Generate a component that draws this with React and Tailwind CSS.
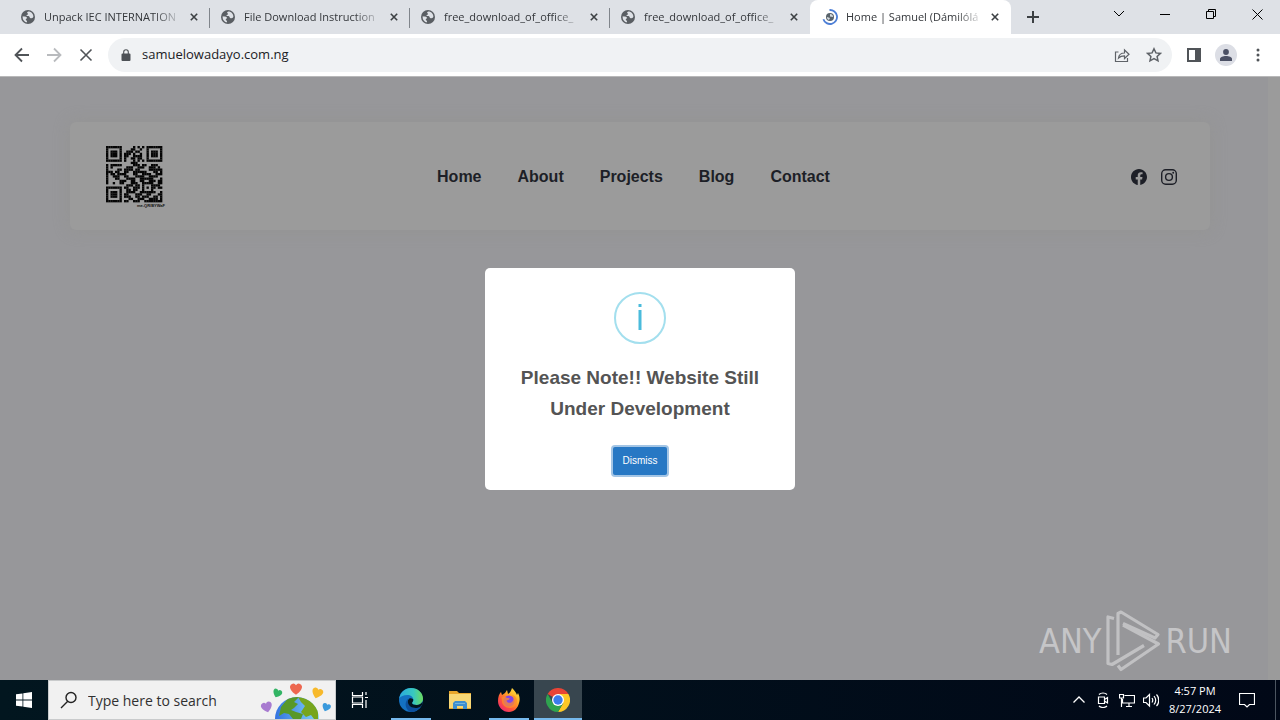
import React from "react";

const QR_ROWS = [
  "1111111000001010101111111",
  "1000001000011001001000001",
  "1011101001110110001011101",
  "1011101011101001001011101",
  "1011101011001111001011101",
  "1000001010011011001000001",
  "1111111010001010101111111",
  "0000000000011100000000000",
  "1011111000001110110011100",
  "1010000001110011100111010",
  "1000011011110110000111111",
  "1110110011001111110001101",
  "1011011110001100111100111",
  "1001110011000111100111100",
  "1000110001111001111110001",
  "1000001110011001100111011",
  "1001001100011100111110011",
  "0000000001110110100011110",
  "1111111011001110101011011",
  "1000001001101100100010000",
  "1011101001111001111111001",
  "1011101011000111001100011",
  "1011101011100110111001101",
  "1000001000110011100111101",
  "1111111011001110011111111",
];

function QrCode() {
  return (
    <svg viewBox="0 0 60 62" className="h-[62px] w-[60px]" role="img" aria-label="QR code">
      <g transform="scale(2.25)" fill="#050505" shapeRendering="geometricPrecision">
        {QR_ROWS.map((row, y) =>
          [...row].map((cell, x) =>
            cell === "1" ? <rect key={`${x}-${y}`} x={x} y={y} width="1.04" height="1.04" /> : null
          )
        )}
      </g>
      <text x="59" y="61" textAnchor="end" fontSize="4" fontWeight="700" fontFamily="Liberation Sans, sans-serif" fill="#111">
        me-QR/BYWaF
      </text>
    </svg>
  );
}

function GlobeIcon({ className }) {
  return (
    <svg viewBox="0 0 16 16" className={className} aria-hidden="true">
      <circle cx="8" cy="8" r="7" fill="#5a5e63" />
      <path d="M8.3 2.6c-1.5.3-1.6 1.6-.5 1.9 1 .4-.2 1.3-1 1.6-.7.5-.2 1 .7 1 1.700 0 2.200.7 2.300 1.600.4.8 1.500.3 2.400.2.700 0 .9-.6 1.200-1.300C13.200 4.700 11 2.500 8.300 2.600z" fill="#dee1e6" />
      <path d="M2.700 7.200c1.400.2 3.300.3 4 1.100.6.7.2 1.300-.6 1.600-.700.4-.2 1.300.400 1.500.500.300.600 1.100.5 1.900C4.100 13 2.300 10.300 2.700 7.200z" fill="#dee1e6" />
    </svg>
  );
}

function SpinnerIcon() {
  return (
    <svg viewBox="0 0 16 16" className="size-4 shrink-0" aria-hidden="true">
      <circle cx="8" cy="8" r="4" fill="#59636b" />
      <path d="M8 5c2 0 3 1 3 3L8 7.500zM5 8l3 1-1 2C5.500 10.500 5 9.500 5 8z" fill="#d5dbe0" />
      <path d="M7.500 1A7 7 0 1 1 1.400 10.200" fill="none" stroke="#4d7fd6" strokeWidth="1.800" />
    </svg>
  );
}

function Stroke({ d, className = "size-4", width = 2, box = "0 0 16 16" }) {
  return (
    <svg viewBox={box} className={className} fill="none" stroke="currentColor" strokeWidth={width} aria-hidden="true">
      <path d={d} />
    </svg>
  );
}

function Tab({ title, active, divider }) {
  return (
    <div
      className={
        active
          ? "relative flex w-[201px] items-center rounded-t-lg bg-white pr-2 pl-3"
          : "relative flex w-[200px] items-center pr-2 pl-[10px]"
      }
    >
      {active ? <SpinnerIcon /> : <GlobeIcon className="size-4 shrink-0" />}
      <span className="ml-2 w-[138px] text-[11px] whitespace-nowrap text-[#34373b] [mask-image:linear-gradient(to_right,black_80%,transparent)]">
        {title}
      </span>
      <button aria-label={`Close ${title}`} className="ml-auto flex size-4 shrink-0 items-center justify-center text-[#3c4043]">
        <Stroke d="M1 1l8 8M9 1l-8 8" box="0 0 10 10" className="size-2" />
      </button>
      {divider && <span className="absolute top-2 right-0 h-5 w-px bg-[#80858b]" />}
    </div>
  );
}

function TabStrip() {
  return (
    <div className="flex h-[34px] shrink-0 bg-[#dee1e6] pl-[10px]">
      <Tab title="Unpack IEC INTERNATION" divider />
      <Tab title="File Download Instruction" divider />
      <Tab title="free_download_of_office_" divider />
      <Tab title="free_download_of_office_" />
      <Tab title="Home | Samuel (Dámilólá" active />
      <button aria-label="New tab" className="ml-[14px] flex w-4 items-center justify-center text-[#3c4043]">
        <Stroke d="M6 0v12M0 6h12" box="0 0 12 12" className="size-3" />
      </button>
      <div className="ml-auto flex h-7 text-black">
        <button aria-label="Search tabs" className="flex w-[46px] items-center justify-center">
          <Stroke d="M1 1l5 5 5-5" box="0 0 12 8" width={1} className="h-2 w-3" />
        </button>
        <button aria-label="Minimize" className="flex w-[46px] items-center justify-center">
          <Stroke d="M0 5.500h10" box="0 0 10 10" width={1} className="size-[10px]" />
        </button>
        <button aria-label="Restore" className="flex w-[46px] items-center justify-center">
          <Stroke d="M.5 2.500h7v7h-7zM2.500 2.500v-2h7v7h-2" box="0 0 10 10" width={1} className="size-[10px]" />
        </button>
        <button aria-label="Close window" className="flex w-[46px] items-center justify-center">
          <Stroke d="M.5.500l10 10M10.500.500l-10 10" box="0 0 11 11" width={1} className="size-[11px]" />
        </button>
      </div>
    </div>
  );
}

function Toolbar() {
  return (
    <div className="flex h-[43px] shrink-0 items-center border-b border-[#b8b8b9] bg-white pr-[14px] pl-[14px]">
      <div className="flex gap-4 text-[#505458]">
        <button aria-label="Back">
          <Stroke d="M15 8H2M8 1.500L1.500 8 8 14.500" width={1.800} />
        </button>
        <button aria-label="Forward" className="text-[#b9bbbe]">
          <Stroke d="M1 8h13M8 1.500L14.500 8 8 14.500" width={1.800} />
        </button>
        <button aria-label="Stop loading">
          <Stroke d="M2.500 2.500l11 11M13.500 2.500l-11 11" width={1.600} />
        </button>
      </div>
      <div className="ml-[14px] flex h-[34px] flex-1 items-center rounded-full bg-[#f0f2f4] pr-[10px] pl-[13px] text-[#5f6368]">
        <svg viewBox="0 0 10 12" className="h-3 w-[10px]" aria-hidden="true">
          <path d="M1.500 4.500h7a1 1 0 0 1 1 1V11a1 1 0 0 1-1 1h-7a1 1 0 0 1-1-1V5.500a1 1 0 0 1 1-1z" fill="#4d5156" />
          <path d="M2.700 5V3a2.300 2.300 0 0 1 4.600 0v2" fill="none" stroke="#4d5156" strokeWidth="1.100" />
        </svg>
        <input
          aria-label="Address"
          defaultValue="samuelowadayo.com.ng"
          className="ml-[11px] min-w-0 flex-1 bg-transparent text-[13px] text-[#202124] outline-none"
        />
        <div className="flex gap-4">
          <button aria-label="Share">
            <Stroke
              d="M4.500 5H1.500v9.500h12V11M4.500 11c.5-3.500 2.500-5 6-5V3l4.500 4.300-4.500 4.200V8.800c-2.600 0-4.500.7-6 2.200z"
              width={1.200}
            />
          </button>
          <button aria-label="Bookmark this page">
            <Stroke
              d="M8 1.800l1.900 4.100 4.500.5-3.300 3 .9 4.400L8 11.600l-4 2.200.9-4.400-3.300-3 4.500-.5z"
              width={1.500}
            />
          </button>
        </div>
      </div>
      <div className="ml-[14px] flex items-center gap-[13px] text-[#505458]">
        <button aria-label="Side panel">
          <svg viewBox="0 0 16 16" className="size-4" aria-hidden="true">
            <path d="M1 1h14v14H1zM3 3v10h6V3z" fill="currentColor" fillRule="evenodd" />
          </svg>
        </button>
        <button aria-label="Profile" className="flex size-[22px] items-center justify-center rounded-full bg-[#dcdee5] text-[#4b5064]">
          <svg viewBox="0 0 14 14" className="size-[14px]" fill="currentColor" aria-hidden="true">
            <circle cx="7" cy="4" r="2.900" />
            <path d="M1 13v-2c0-2 3-3 6-3s6 1 6 3v2z" />
          </svg>
        </button>
        <button aria-label="Menu">
          <svg viewBox="0 0 16 16" className="size-4" fill="currentColor" aria-hidden="true">
            <circle cx="8" cy="3" r="1.500" />
            <circle cx="8" cy="8" r="1.500" />
            <circle cx="8" cy="13" r="1.500" />
          </svg>
        </button>
      </div>
    </div>
  );
}

function SiteHeader() {
  return (
    <header className="grid h-[108px] grid-cols-[1fr_auto_1fr] items-center rounded-md bg-[#9b9b9b] pt-px pr-[33px] pl-9 shadow-[0_0_16px_rgba(148,148,145,0.9)]">
      <a href="#home" aria-label="Samuel home" className="w-[60px]">
        <QrCode />
      </a>
      <nav className="flex gap-9 pr-4 font-['Liberation_Sans',Arial,sans-serif] text-[16px] font-bold text-[#1d1f27]">
        <a href="#home">Home</a>
        <a href="#about">About</a>
        <a href="#projects">Projects</a>
        <a href="#blog">Blog</a>
        <a href="#contact">Contact</a>
      </nav>
      <div className="flex justify-end gap-[14px] text-[#1d1f27]">
        <a href="#facebook" aria-label="Facebook">
          <svg viewBox="0 0 16 16" className="size-4" fill="currentColor" aria-hidden="true">
            <path d="M16 8.049c0-4.446-3.582-8.050-8-8.050C3.580 0-.002 3.603-.002 8.050c0 4.017 2.926 7.347 6.750 7.951v-5.625h-2.030V8.050H6.750V6.275c0-2.017 1.195-3.131 3.022-3.131.876 0 1.791.157 1.791.157v1.980h-1.009c-.993 0-1.303.621-1.303 1.258v1.510h2.218l-.354 2.326H9.250V16c3.824-.604 6.750-3.934 6.750-7.951z" />
          </svg>
        </a>
        <a href="#instagram" aria-label="Instagram">
          <svg viewBox="0 0 16 16" className="size-4" fill="none" stroke="currentColor" strokeWidth="1.400" aria-hidden="true">
            <rect x=".7" y=".7" width="14.600" height="14.600" rx="4" />
            <circle cx="8" cy="8" r="3.400" />
            <circle cx="12.200" cy="3.800" r=".95" fill="currentColor" stroke="none" />
          </svg>
        </a>
      </div>
    </header>
  );
}

function NoticeDialog() {
  return (
    <div
      role="dialog"
      aria-labelledby="notice-title"
      className="flex w-[310px] flex-col items-center rounded-[5px] bg-white px-5 pt-6 pb-[15px] font-['Liberation_Sans',Arial,sans-serif]"
    >
      <div className="flex size-[52px] items-center justify-center rounded-full border-2 border-[#a3dfee]">
        <svg viewBox="0 0 6 28" className="h-7 w-[6px]" fill="#4abbdc" aria-hidden="true">
          <rect x="1.500" y="0" width="3" height="3" />
          <rect x="1.500" y="6" width="3" height="20" />
        </svg>
      </div>
      <h2 id="notice-title" className="mt-[18px] text-center text-[19px] leading-[31px] font-bold text-[#545454]">
        Please Note!! Website Still
        <br />
        Under Development
      </h2>
      <button className="mt-[23px] h-7 w-[54px] rounded-[2px] bg-[#2778c4] text-[10px] text-white ring-2 ring-[#a3c5e5]">
        Dismiss
      </button>
    </div>
  );
}

function Watermark() {
  return (
    <div className="absolute right-12 bottom-2 flex items-center font-['Liberation_Sans_Narrow','DejaVu_Sans_Condensed',sans-serif] text-[34px] leading-none text-[#c5c5c7]">
      <span>ANY</span>
      <svg viewBox="0 0 56 62" className="mx-1 h-[62px] w-14" fill="none" stroke="#c1c1c3" strokeWidth="3.200" strokeLinejoin="round" aria-hidden="true">
        <path d="M9 8.500L3 7v46.500l4 1L39 35.500" />
        <path d="M13 45V3.500L16 2l37 22.500-3 3.500L18 13.500" />
        <path d="M18 15l35.500 19L16 59.500l-3-4" />
      </svg>
      <span>RUN</span>
    </div>
  );
}

const HEART = "M0 4C-4 1-5-1-5-3a2.700 2.700 0 0 1 5-1 2.700 2.700 0 0 1 5 1c0 2-1 4-5 7z";

function SearchArt() {
  return (
    <svg viewBox="0 0 76 38" className="h-[38px] w-[76px] self-end" aria-hidden="true">
      <defs>
        <clipPath id="earth">
          <circle cx="39" cy="38" r="22" />
        </clipPath>
        <linearGradient id="sea">
          <stop offset="0" stopColor="#3373e0" />
          <stop offset="1" stopColor="#82d3fa" />
        </linearGradient>
      </defs>
      <circle cx="39" cy="38" r="22" fill="url(#sea)" />
      <g clipPath="url(#earth)" fill="#589829">
        <path d="M23 26l8-10h10l-5 5 4 2-4 4-3 2 5 2 7 2-2 5h-8l-4-5-5-1-5 3z" />
        <path d="M40 16c7 0 16 5 20 13v9h-4l-3-4-5 2-5-5 4-6-4-4z" fill="#77a51d" />
      </g>
      <path d={HEART} transform="translate(38 9) scale(1.200)" fill="#ed6750" />
      <path d={HEART} transform="translate(19 13) rotate(22) scale(.9)" fill="#32b464" />
      <path d={HEART} transform="translate(59 13) rotate(18) scale(1.100)" fill="#f7b92b" />
      <path d={HEART} transform="translate(9 27) rotate(-14) scale(1.100)" fill="#a87bd0" />
      <path d={HEART} transform="translate(68 27) rotate(20) scale(.85)" fill="#3999dc" />
    </svg>
  );
}

function EdgeIcon() {
  return (
    <svg viewBox="0 0 24 24" className="size-6" aria-hidden="true">
      <defs>
        <linearGradient id="edge-top" x1="0" y1=".5" x2="1" y2=".5">
          <stop offset="0" stopColor="#2aa9de" />
          <stop offset=".6" stopColor="#38c8c0" />
          <stop offset="1" stopColor="#6ddc5d" />
        </linearGradient>
      </defs>
      <circle cx="12" cy="12" r="12" fill="#1471c2" />
      <path d="M.2 10.500C1.200 4.300 6 0 12 0c7 0 12 5 12 10.500 0 4-3 6.500-6.500 6.500-2.500 0-4.500-1-4.500-2 0-.8 1.300-1.200 1.300-3.200C14.300 9 11.500 7 8.500 7 4.500 7 1.500 8.500.2 10.500z" fill="url(#edge-top)" />
      <path d="M9.500 10.500C7 14 10 20 16.500 20c2 0 3.600-.6 5.200-1.500C19 22.500 16 24 12 24 6.500 22.500 4.500 14 9.500 10.500z" fill="#0c4f9d" />
      <path d="M13 15c0 1 2 2 4.500 2 3 0 5-1.500 6-3.500.4 2-.4 3.700-1.800 5C20 19.600 18 20 16.500 20c-4.500 0-7.500-3-7.700-6 0-1.500.7-3 1.900-3.700 1.800 0 3.600.5 3.600 1.500 0 2-1.300 2.400-1.300 3.200z" fill="#03141f" />
    </svg>
  );
}

function FolderIcon() {
  return (
    <svg viewBox="0 0 22 18" className="h-[18px] w-[22px]" aria-hidden="true">
      <path d="M0 0h8l2 2h12v16H0z" fill="#e8a62b" />
      <path d="M0 3h22v14H0z" fill="#f8d775" />
      <path d="M4 18v-6l2-2h10l2 2v6h-4v-3H8v3z" fill="#3e8fd0" />
      <path d="M6 12h10v1H6z" fill="#72b4df" />
    </svg>
  );
}

function FirefoxIcon() {
  return (
    <svg viewBox="0 0 24 24" className="size-6" aria-hidden="true">
      <defs>
        <linearGradient id="fox" x1="1" y1="0" x2=".2" y2="1">
          <stop offset="0" stopColor="#fff04c" />
          <stop offset=".4" stopColor="#ffac26" />
          <stop offset=".7" stopColor="#ff5738" />
          <stop offset="1" stopColor="#ed2773" />
        </linearGradient>
      </defs>
      <path d="M1 13C1 9 2 6 4 4l1 3 3-2 2-3 1 4c2-1 3-3 4-6 2 2 4 4 5 7l1-2c2 4 2 7 1 10-1 5-5 9-10 9C5.500 24 1 19 1 13z" fill="url(#fox)" />
      <circle cx="12" cy="13" r="5.500" fill="#8345e6" />
      <path d="M4.500 9.500c2-1 4-1 5.500.5 1 0 2 0 3 .5-1 1.500-2.500 1.500-3.500 2 .5 2.500 3.500 3 5.500 1.500 2-1.500 2-5-1-7 4 0 6 3 6 6.500 0 4-3.500 6.500-7.500 6.500S5 17 5 13.500z" fill="#ff8c2c" opacity=".75" />
    </svg>
  );
}

function ChromeIcon() {
  return (
    <svg viewBox="0 0 24 24" className="size-6" aria-hidden="true">
      <path d="M12 12L1.600 6A12 12 0 0 1 22.400 6z" fill="#e84436" />
      <path d="M12 12V6h10.400A12 12 0 0 1 12 24l5.200-9z" fill="#fdc827" />
      <path d="M12 12l5.200 3L12 24A12 12 0 0 1 1.600 6l5.200 9z" fill="#2fa34f" />
      <circle cx="12" cy="12" r="6" fill="#fff" />
      <circle cx="12" cy="12" r="4.700" fill="#3a7cec" />
    </svg>
  );
}

function TaskButton({ label, running, active, children }) {
  return (
    <button
      aria-label={label}
      className={
        active
          ? "relative flex w-12 items-center justify-center bg-[#38464f]"
          : "relative flex w-12 items-center justify-center"
      }
    >
      {children}
      {running && (
        <span className={active ? "absolute inset-x-0 bottom-0 h-0.5 bg-[#76b9ed]" : "absolute inset-x-1 bottom-0 h-0.5 bg-[#76b9ed]"} />
      )}
    </button>
  );
}

function Taskbar() {
  return (
    <footer className="flex h-10 shrink-0 bg-linear-to-r from-[#02161f] to-[#010817] text-white">
      <button aria-label="Start" className="flex w-12 items-center justify-center">
        <svg viewBox="0 0 16 16" className="size-4" fill="#fff" aria-hidden="true">
          <path d="M0 2.300l6.500-.9v6.200H0zM7.300 1.300L16 0v7.600H7.300zM0 8.400h6.500v6.200L0 13.700zM7.300 8.400H16V16l-8.700-1.300z" />
        </svg>
      </button>
      <label className="flex w-72 items-center border border-[#c9cbcc] bg-[#f1f1f1] pr-px pl-[11px] text-[#222]">
        <Stroke d="M11 1.500a5 5 0 1 1 0 10 5 5 0 0 1 0-10zM7.500 10.500L1 17" box="0 0 18 18" width={1.400} className="size-[18px] shrink-0" />
        <input
          type="search"
          aria-label="Search"
          placeholder="Type here to search"
          className="ml-[10px] min-w-0 flex-1 bg-transparent text-[14px] outline-none placeholder:text-[#303030]"
        />
        <SearchArt />
      </label>
      <TaskButton label="Task view">
        <Stroke d="M1.500 0v3.500h10V0M1.500 16v-3.500h10V16M1.500 5h10v6h-10zM15 0v3M15 8v8M14 5.500h3" box="0 0 18 16" width={1.200} className="h-4 w-[18px]" />
      </TaskButton>
      <div className="ml-[3px] flex gap-px">
        <TaskButton label="Microsoft Edge" running>
          <EdgeIcon />
        </TaskButton>
        <TaskButton label="File Explorer">
          <FolderIcon />
        </TaskButton>
        <TaskButton label="Firefox" running>
          <FirefoxIcon />
        </TaskButton>
        <TaskButton label="Google Chrome" running active>
          <ChromeIcon />
        </TaskButton>
      </div>
      <div className="ml-auto flex items-center">
        <div className="flex gap-2">
          <button aria-label="Show hidden icons">
            <Stroke d="M2.500 10.500L8 5l5.500 5.500" width={1.300} />
          </button>
          <button aria-label="Meet now">
            <Stroke d="M3.500 5h6v6.500h-6zM9.500 7.500l3-2v5.500l-3-2M4 2.500c2-2 6-2 8 0M4 14c2 2 6 2 8 0" width={1.200} />
          </button>
          <button aria-label="Network">
            <Stroke d="M5.500 3.500h10v7.500H3.500V7M7 14.500h6M10 11v3.500M.5 2.500h4V6h-4zM2.500 6v9" width={1.200} />
          </button>
          <button aria-label="Volume">
            <Stroke d="M.5 6v4.500h2.500L6.500 14V2.500L3 6zM9 6c1 1.500 1 3 0 4.500M11 4c2 2.500 2 6 0 8.500M13.500 2.500c3 3 3 8.500 0 11.500" width={1.200} />
          </button>
        </div>
        <time className="ml-2 w-14 text-center text-[11px] leading-[18px]">
          4:57 PM
          <br />
          8/27/2024
        </time>
        <button aria-label="Notifications" className="ml-4">
          <Stroke d="M.5 1.500h15v11h-5L8 15l-2.500-2.500h-5z" width={1.200} />
        </button>
        <span className="mr-1 ml-5 h-10 w-px bg-[#4c5560]" />
      </div>
    </footer>
  );
}

export default function App() {
  return (
    <div className="flex min-h-screen flex-col overflow-hidden font-['Open_Sans','Noto_Sans',sans-serif]">
      <TabStrip />
      <Toolbar />
      <main className="relative flex flex-1 bg-[#97979a]">
        <div className="flex-1 pt-[45px] pr-[58px] pl-[70px]">
          <SiteHeader />
        </div>
        <div className="w-3 bg-[#9b9b9b]" />
        <div className="absolute inset-0 flex items-center justify-center">
          <NoticeDialog />
        </div>
        <Watermark />
      </main>
      <Taskbar />
    </div>
  );
}
